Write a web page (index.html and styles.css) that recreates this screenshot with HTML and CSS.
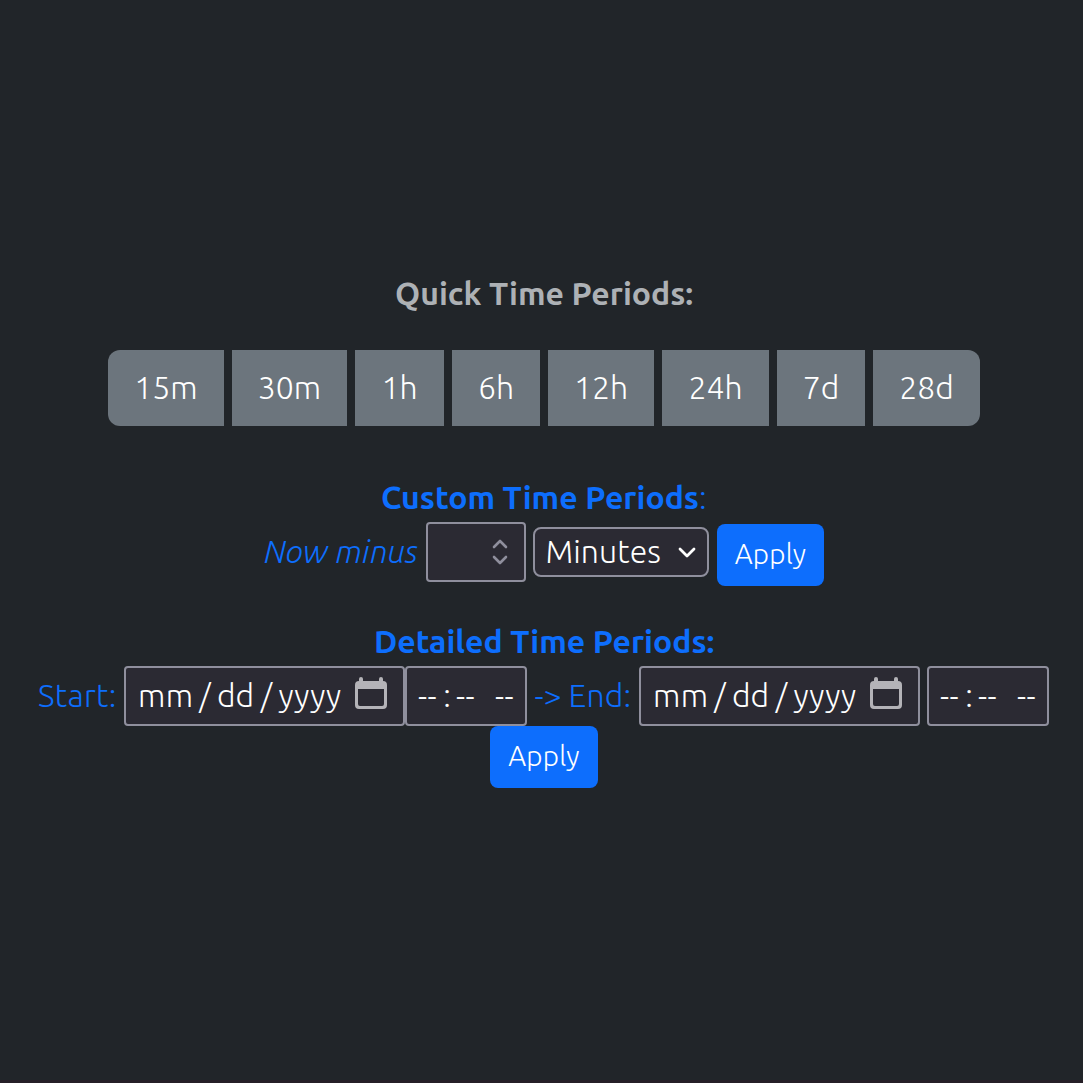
FILE: index.html
```html
<!DOCTYPE html>
<html lang="en">
<head>
<meta charset="utf-8">
<title>Time Periods</title>
<link rel="stylesheet" href="styles.css">
</head>
<body>
<svg class="symbols" aria-hidden="true">
  <symbol id="calendar" viewBox="0 0 32 32">
    <path fill="currentColor" fill-rule="evenodd" d="M4 4V2a2 2 0 0 1 4 0v2h16V2a2 2 0 0 1 4 0v2a4 4 0 0 1 4 4v20a4 4 0 0 1-4 4H4a4 4 0 0 1-4-4V8a4 4 0 0 1 4-4zM3 12v15a2 2 0 0 0 2 2h22a2 2 0 0 0 2-2V12z"/>
  </symbol>
</svg>
<main class="panel">
  <h2 class="title quick-title">Quick Time Periods:</h2>
  <div class="quick">
    <button class="period w116">15m</button>
    <button class="period w115">30m</button>
    <button class="period w89">1h</button>
    <button class="period w88">6h</button>
    <button class="period w106">12h</button>
    <button class="period w107">24h</button>
    <button class="period w88">7d</button>
    <button class="period w107">28d</button>
  </div>
  <section class="custom">
    <h2 class="title custom-title">Custom Time Periods<span class="thin">:</span></h2>
    <div class="custom-row">
      <em class="now">Now minus</em>
      <div class="field number">
        <svg width="16" height="26" viewBox="0 0 16 26" fill="none" stroke="currentColor" stroke-width="2.6" stroke-linecap="round" stroke-linejoin="round"><path d="M2 8l6-6 6 6M2 18l6 6 6-6"/></svg>
      </div>
      <div class="field select"><span class="minutes">Minutes</span>
        <svg class="chevron" width="18" height="12" viewBox="0 0 18 12" fill="none" stroke="currentColor" stroke-width="2.8" stroke-linecap="round" stroke-linejoin="round"><path d="M2 2l7 7 7-7"/></svg>
      </div>
      <button class="apply">Apply</button>
    </div>
  </section>
  <section class="detailed">
    <h2 class="title detailed-title">Detailed Time Periods:</h2>
    <div class="detail-row">
      <span class="start">Start:</span>
      <div class="field date"><span class="mm">mm</span><span class="slash">/</span><span class="dd">dd</span><span class="slash">/</span><span class="yyyy">yyyy</span><svg class="cal"><use href="#calendar"/></svg></div>
      <div class="field time"><span class="dash">--</span><span class="colon">:</span><span class="dash">--</span><span class="dash ampm">--</span></div>
      <span class="arrow">-&gt;</span><span class="end">End:</span>
      <div class="field date"><span class="mm">mm</span><span class="slash">/</span><span class="dd">dd</span><span class="slash">/</span><span class="yyyy">yyyy</span><svg class="cal"><use href="#calendar"/></svg></div>
      <div class="field time last"><span class="dash">--</span><span class="colon">:</span><span class="dash">--</span><span class="dash ampm">--</span></div>
    </div>
    <button class="apply wide">Apply</button>
  </section>
</main>
</body>
</html>
```
FILE: styles.css
```css
* { box-sizing: border-box; }
body {
  margin: 0;
  height: 1083px;
  overflow: hidden;
  background: #212529;
  border-bottom: 3px solid #261f27;
  color: #0d6efd;
  font: 300 32px/48px Ubuntu, "Open Sans", "Noto Sans", sans-serif;
  white-space: nowrap;
}
.symbols { display: none; }
svg { display: block; flex: none; }
.panel { padding-top: 270px; }
button {
  font: inherit;
  border: 0;
  padding: 0;
  color: #fff;
}
.title {
  margin: 0;
  height: 48px;
  font-size: 32px;
  font-weight: 600;
  line-height: 46px;
}
.quick-title { margin-left: 395px; color: #adb1b5; }
.custom-title { margin-left: 381px; }
.detailed-title { margin-left: 374px; }
.thin { font-weight: 300; }
.quick {
  display: flex;
  gap: 8px;
  margin: 32px 0 0 108px;
}
.period {
  height: 76px;
  padding-bottom: 2px;
  background: #6c757d;
}
.period:first-child { border-radius: 12px 0 0 12px; }
.period:last-child { border-radius: 0 12px 12px 0; }
.w116 { width: 116px; }
.w115 { width: 115px; }
.w89 { width: 89px; }
.w88 { width: 88px; }
.w106 { width: 106px; }
.w107 { width: 107px; }
.custom { padding-top: 48px; }
.custom-row {
  display: flex;
  align-items: center;
  height: 64px;
  padding-left: 264px;
}
.custom-row span, .detail-row span { padding-bottom: 2px; }
.now { width: 162px; margin-top: -6px; letter-spacing: .2px; }
.field {
  display: flex;
  align-items: center;
  flex: none;
  background: #2b2a33;
  border: 2px solid #8f8f9d;
  border-radius: 4px;
  color: #fff;
}
.number {
  width: 100px;
  height: 60px;
  margin: -4px 7px 0 0;
  justify-content: flex-end;
  padding-right: 16px;
  color: #8f8f9d;
}
.select {
  width: 176px;
  height: 50px;
  margin: -4px 8px 0 0;
  padding: 0 11px 0 10.5px;
  border-radius: 8px;
  justify-content: space-between;
}
.minutes { letter-spacing: .1px; }
.chevron { margin-top: 2px; }
.apply {
  display: block;
  width: 107px;
  height: 62px;
  padding-bottom: 2px;
  background: #0d6efd;
  border-radius: 8px;
  font-size: 28px;
  letter-spacing: .2px;
}
.custom-row .apply { margin-top: 2px; }
.detailed { padding-top: 32px; }
.detail-row {
  display: flex;
  align-items: center;
  height: 60px;
  padding-left: 38px;
}
.start { width: 86px; letter-spacing: .3px; }
.date { width: 281px; height: 60px; padding-left: 12px; }
.time { width: 122px; height: 60px; padding-left: 11px; }
.arrow { width: 34px; margin-left: 7.5px; }
.end { width: 70.5px; letter-spacing: .2px; }
.last { margin-left: 7px; }
.mm { width: 56.5px; letter-spacing: .3px; }
.slash { width: 21px; margin-right: 1.5px; text-align: center; }
.dd { width: 39px; }
.yyyy { width: 76.5px; letter-spacing: .2px; }
.date .cal { width: 32px; height: 32px; margin-top: -7px; color: #b4b3b8; }
.dash { width: 20px; letter-spacing: .3px; }
.colon { width: 18px; text-align: center; }
.ampm { margin-left: 19px; }
.wide { width: 108px; margin-left: 490px; }
```
